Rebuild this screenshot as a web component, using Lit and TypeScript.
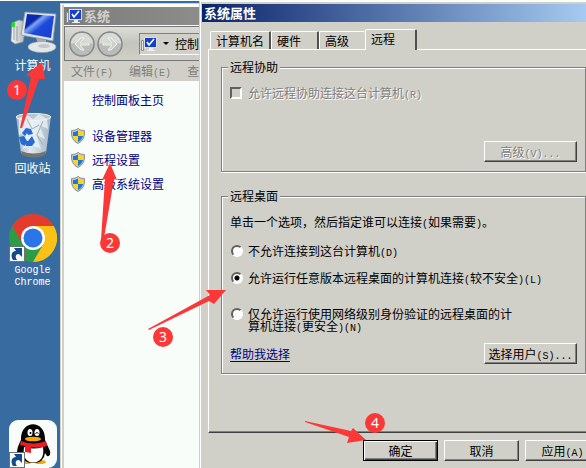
import { LitElement, html, css, svg } from "lit";
import { customElement, state } from "lit/decorators.js";

const key = (k: string) => html`<span class="key">(${k})</span>`;

const pcIcon = (size: number) => html`
  <svg width=${size} height=${size} viewBox="0 0 48 48" aria-hidden="true">
    <defs>
      <linearGradient id="scr" x1="0" y1="0" x2="1" y2="1">
        <stop offset="0" stop-color="#0a2fb4" />
        <stop offset=".3" stop-color="#0a28b0" />
        <stop offset=".38" stop-color="#7fa4f0" />
        <stop offset=".55" stop-color="#1c48dc" />
        <stop offset="1" stop-color="#1a3fd0" />
      </linearGradient>
      <linearGradient id="twr" x1="0" x2="1">
        <stop offset="0" stop-color="#f4f5f4" />
        <stop offset="1" stop-color="#a9aeb0" />
      </linearGradient>
    </defs>
    <path d="M3 15 L10 12 L18 14 L14 34 L6 36 L2 33Z" fill="url(#twr)" stroke="#8d9498" stroke-width=".6" />
    <path d="M5 18v14M8 18v15" stroke="#8b9194" stroke-width=".8" />
    <rect x="3" y="14" width="3" height="5" fill="#36d43a" />
    <path d="M16 4 L47 6 L44 33 L12 27Z" fill="#dfe3e4" stroke="#8f989c" stroke-width=".8" />
    <path d="M18 6 L45 8 L42 30 L15 25Z" fill="url(#scr)" />
    <path d="M27 30 L37 32 L37 38 L30 38Z" fill="#a8afb1" />
    <ellipse cx="33" cy="39" rx="14" ry="5.500" fill="#e4e7e7" stroke="#9aa1a3" stroke-width=".6" />
    <ellipse cx="35" cy="38" rx="6" ry="2" fill="#c3c8ca" />
  </svg>`;

const shortcut = svg`
  <rect x=".5" y="32.500" width="15" height="15" fill="#f8fdfa" stroke="#6c7276" />
  <path d="M4 46 C1 41 3 37 7 37 L5 34 L13 34 L13 43 L10 40 C6 40 6 43 8 46Z" fill="#124a8c" />`;

const binIcon = html`
  <svg width="48" height="48" viewBox="0 0 48 48" aria-hidden="true">
    <defs>
      <linearGradient id="bin" x1="0" x2="1">
        <stop offset="0" stop-color="#9fb6c6" />
        <stop offset=".4" stop-color="#dfe9f0" />
        <stop offset="1" stop-color="#a3b5c3" />
      </linearGradient>
    </defs>
    <path d="M7 5 L42 5 L37 42 Q25 49 12 42Z" fill="url(#bin)" />
    <path d="M12 40 Q25 45 37 40 L36 44 Q25 49 13 44Z" fill="#77736f" />
    <ellipse cx="24.500" cy="6" rx="17.500" ry="3.500" fill="#b9c4cb" stroke="#f0f2f2" />
    <path d="M10 7 L18 4 L24 8 L30 3 L38 8 L39 18 L30 14 L36 28 L27 24 L32 38 L22 34 L14 38 L17 22 L10 24Z" fill="#eef3f6" opacity=".75" />
    <path d="M18 8 L23 18 L30 14 M34 10 L28 24 L34 34" fill="none" stroke="#9aaebc" />
    <path d="M13 22 l4-5 5 1 2 5-5 1-1-2-2 3Z M10 26 l5-1 3 5-2 5-4-2Z M19 30 l4-5 3 6-3 4h-6v-5Z" fill="#2a6bd0" />
  </svg>`;

const chromeIcon = html`
  <svg width="48" height="48" viewBox="0 0 48 48" aria-hidden="true">
    <circle cx="24" cy="24" r="24" fill="#2b9d47" />
    <path d="M24 12 H44.800 A24 24 0 0 1 24 48 L34.400 30Z" fill="#fbc116" />
    <path d="M24 24 L13.600 30 L3.200 12 A24 24 0 0 1 44.800 12 H24Z" fill="#e33b2e" />
    <circle cx="24" cy="24" r="12" fill="#fff" />
    <circle cx="24" cy="24" r="9.500" fill="#2a76e8" />
    ${shortcut}
  </svg>`;

const qqIcon = html`
  <svg width="48" height="48" viewBox="0 0 48 48" aria-hidden="true">
    <rect width="48" height="48" rx="9" fill="#f8fdfa" />
    <ellipse cx="17" cy="42" rx="6" ry="2" fill="#f6a800" />
    <ellipse cx="31" cy="42" rx="6" ry="2" fill="#f6a800" />
    <path d="M12 20 C11 -1 37 -1 36 20 L41 31 Q42 37 38 36 L36 33 Q35 43 24 43 Q14 43 12 34 L8 33 Q8 27 12 20Z" fill="#050505" />
    <path d="M15 27 Q24 30 34 27 Q36 42 24 42.500 Q13 42 15 27Z" fill="#fff" />
    <path d="M12 21 Q24 26 37 21 L38 26 Q30 29 22 27 V33 L16 32 V26 L11 25Z" fill="#ea1c24" />
    <ellipse cx="21" cy="12.500" rx="2.500" ry="3.500" fill="#fff" />
    <ellipse cx="28" cy="12.500" rx="2.500" ry="3.500" fill="#fff" />
    <circle cx="21.500" cy="13" r="1" />
    <path d="M26.500 13.500 q1.500-2 3 0" fill="none" stroke="#000" />
    <ellipse cx="24" cy="19" rx="8" ry="2.300" fill="#f6a800" />
    ${shortcut}
  </svg>`;

const sysIcon = html`
  <svg width="16" height="16" viewBox="0 0 16 16" aria-hidden="true">
    <path d="M.5 4.500h2v10h-2z" fill="#e4e6e4" stroke="#8a9094" />
    <rect x="3.500" y="1.500" width="12" height="10" fill="#1540cc" stroke="#d8dfe6" />
    <path d="M6 6l2 3 5-6" fill="none" stroke="#fff" stroke-width="1.600" />
    <path d="M8 12h4v2h2v1H6v-1h2z" fill="#eceeec" />
  </svg>`;

const shieldIcon = html`
  <svg width="14" height="16" viewBox="0 0 14 16" aria-hidden="true">
    <path d="M7 .5 Q9 2.500 13.500 2.500 Q14.500 12 7 15.500 Q-.5 12 .5 2.500 Q5 2.500 7 .5Z" fill="#c4c8c6" stroke="#8c9294" />
    <path d="M7 2.500V8H2V4Q5 4 7 2.500Z" fill="#1f78d8" />
    <path d="M7 2.500V8h5V4Q9 4 7 2.500Z" fill="#ffd21e" />
    <path d="M2 8h5v6Q3 12 2 8Z" fill="#ffd21e" />
    <path d="M12 8H7v6q4-2 5-6Z" fill="#1f78d8" />
  </svg>`;

const navIcon = (flip: boolean) => html`
  <svg width="26" height="26" viewBox="0 0 26 26" aria-hidden="true">
    <circle cx="13" cy="13" r="12" fill="#b9bcb8" stroke="#85898a" stroke-width="1.500" />
    <path d="M2 13a11 11 0 0 1 22 0q-11-5-22 0Z" fill="#d9dbd7" />
    <path d=${flip ? "M20 13l-6-6h-3l4 5H6v2h9l-4 5h3Z" : "M6 13l6-6h3l-4 5h9v2h-9l4 5h-3Z"} fill="#cfd1cd" stroke="#f0f2ee" />
  </svg>`;

@customElement("app-root")
export class AppRoot extends LitElement {
  @state() private choice = 1;

  static styles = css`
    :host {
      display: block;
      --face: #d1d0c8;
      --paper: #f8fdfa;
      --shade: #808080;
      font: 12px/12px "Noto Sans CJK SC", sans-serif;
      color: #000;
    }
    * { box-sizing: border-box; }
    svg { display: block; flex: none; }
    button, input { font: inherit; color: inherit; margin: 0; }
    .key { font: 10px/0 "Liberation Mono", monospace; }
    .screen {
      position: relative;
      display: grid;
      grid-template-columns: 60px 139px 1fr;
      height: 100vh;
      overflow: hidden;
      background: #386ca0;
      border-top: 1px solid var(--paper);
    }
    .desktop {
      display: grid;
      grid-auto-rows: 103px;
      padding: 7px 0 0 5px;
      align-content: start;
    }
    .shortcut {
      display: flex;
      flex-direction: column;
      align-items: center;
      gap: 3px;
      color: #fff;
      text-align: center;
      text-decoration: none;
    }
    .shortcut:last-child { grid-row: 5; }
    .mono { font: 10px/12px "Liberation Mono", monospace; }

    .system {
      margin-top: 2px;
      min-width: 0;
      overflow: hidden;
      display: flex;
      flex-direction: column;
      background: var(--paper);
      border: 1px solid var(--face);
      border-width: 1px 0 0 1px;
      box-shadow: inset 1px 1px 0 #fff, inset 3px 0 0 var(--face);
      padding: 3px 0 0 3px;
      white-space: nowrap;
    }
    .system-title {
      display: flex;
      align-items: center;
      gap: 2px;
      height: 18px;
      padding-left: 2px;
      margin: 0;
      background: linear-gradient(90deg, #7d7d7d, #8c8c8a);
      color: var(--face);
      font-size: 13px;
      font-weight: 700;
    }
    .toolbar {
      display: flex;
      align-items: center;
      height: 35px;
      padding-left: 4px;
      gap: 2px;
      background: linear-gradient(#dddcd6, #c4c4be 50%, #d1d0c8);
      border: 1px solid #77777a;
      border-right: 0;
      margin-top: 1px;
    }
    .nav { padding: 0; border: 0; background: none; }
    .address {
      display: flex;
      align-items: center;
      flex: none;
      gap: 6px;
      height: 22px;
      margin-left: 14px;
      padding: 0 1px;
      border: 1px solid var(--shade);
      border-right-color: #fff;
      border-bottom-color: #fff;
      background: var(--face);
    }
    .menu {
      display: flex;
      gap: 16px;
      height: 20px;
      align-items: center;
      padding-left: 7px;
      background: var(--face);
    }
    .menu-item { padding: 0; border: 0; background: none; color: var(--shade); flex: none; }
    .links {
      display: flex;
      flex-direction: column;
      gap: 8px;
      padding: 11px 0 0 7px;
    }
    .link {
      display: flex;
      align-items: center;
      gap: 7px;
      height: 16px;
      color: #000080;
      text-decoration: none;
    }
    .home { padding-left: 21px; margin-bottom: 12px; }

    .dialog {
      min-width: 0;
      display: flex;
      flex-direction: column;
      background: var(--face);
      border-left: 1px solid var(--face);
      box-shadow: inset 1px 1px 0 #fff;
      padding: 3px 0 0 2px;
    }
    .title {
      display: flex;
      align-items: center;
      height: 18px;
      margin: 0;
      padding-left: 2px;
      background: linear-gradient(90deg, #0a246a, #a6caf0);
      color: #fff;
      font-size: 13px;
      font-weight: 700;
    }
    .tabs {
      display: flex;
      align-items: flex-end;
      padding: 7px 0 0 8px;
    }
    .tab {
      height: 18px;
      padding: 0 2px 0 5px;
      border: 1px solid #fff;
      border-right: 2px solid #505050;
      border-bottom: 0;
      border-radius: 2px 2px 0 0;
      background: var(--face);
      text-align: left;
    }
    .tab-wide { width: 61px; }
    .tab-short { width: 48px; }
    .tab-last { border-right: 0; width: 46px; }
    .tab-active {
      height: 21px;
      width: 52px;
      margin-bottom: -1px;
      padding-bottom: 2px;
      z-index: 1;
    }
    .panel {
      margin-left: 6px;
      padding: 10px 0 58px 12px;
      border-left: 1px solid #fff;
      border-top: 1px solid #fff;
      border-bottom: 1px solid #404040;
      box-shadow: inset 0 -1px 0 var(--shade);
    }
    .group {
      min-width: 0;
      margin: 0;
      padding: 13px 8px 9px 8px;
      border: 1px solid var(--shade);
      box-shadow: inset 1px 1px 0 #fff, 0 1px 0 #fff;
      display: flex;
      flex-direction: column;
    }
    .group + .group { margin-top: 17px; }
    .legend {
      line-height: 14px;
      padding: 0 2px;
      margin-left: -2px;
      background: var(--face);
    }
    .option {
      display: flex;
      align-items: flex-start;
      gap: 6px;
    }
    .disabled { color: var(--shade); text-shadow: 1px 1px 0 #fff; }
    .check, .radio { appearance: none; flex: none; width: 12px; height: 12px; }
    .check {
      border: 2px solid;
      border-color: #606060 #fff #fff #606060;
      background: var(--face);
    }
    .radio {
      border: 2px solid;
      border-color: #606060 #fff #fff #606060;
      border-radius: 50%;
      background: var(--paper);
      margin-left: 1px;
    }
    .radio:checked { background: radial-gradient(circle, #000 2px, var(--paper) 3px); }
    .option-radio { gap: 5px; }
    .hint { margin: 0 0 17px; }
    .second { margin: 15px 0 24px; }
    .row { display: flex; align-items: center; justify-content: space-between; margin-top: 11px; }
    .row-end { justify-content: flex-end; margin-top: 42px; }
    .help { color: #000080; text-decoration: underline; text-underline-offset: 2px; }
    .btn {
      flex: none;
      height: 21px;
      width: 75px;
      padding: 0;
      border: 1px solid;
      border-color: #fff #404040 #404040 #fff;
      box-shadow: inset -1px -1px 0 var(--shade);
      background: var(--face);
      white-space: nowrap;
    }
    .btn-wide { width: 93px; }
    .btn-default { border-color: #000; box-shadow: inset 1px 1px 0 #fff, inset -1px -1px 0 #404040, inset -2px -2px 0 var(--shade); }
    .footer {
      display: flex;
      justify-content: flex-end;
      gap: 6px;
      margin-right: -14px;
      padding-top: 7px;
    }
    .marks {
      position: absolute;
      inset: -1px 0 0 0;
      width: 100%;
      height: 100%;
      z-index: 2;
      pointer-events: none;
      fill: #fb3838;
    }
    .num { fill: #fff; font: 14px "Noto Sans", sans-serif; text-anchor: middle; }
  `;

  private radio(i: number, body: unknown, cls = "") {
    return html`<label class="option option-radio ${cls}">
      <input class="radio" type="radio" name="remote" .checked=${this.choice === i} @change=${() => (this.choice = i)} />
      <span>${body}</span>
    </label>`;
  }

  render() {
    const marks: [string, number, number][] = [
      ["42,62 26,75 31,77 20,128 22,128 39,79 45,79", 17, 90],
      ["110,163 102,180 105,179 101,240 104,238 114,179 117,180", 110, 243],
      ["226,290 206,290 210,295 148,329 149,330 209,301 214,304", 163, 337],
      ["366,440 353,428 351,431 305,421 305,422 349,437 347,443", 375, 423],
    ];
    return html`
      <main class="screen">
        <nav class="desktop">
          <a class="shortcut" href="#pc">${pcIcon(48)}<span>计算机</span></a>
          <a class="shortcut" href="#bin">${binIcon}<span>回收站</span></a>
          <a class="shortcut" href="#chrome">${chromeIcon}<span class="mono">Google<br />Chrome</span></a>
          <a class="shortcut" href="#qq" aria-label="QQ">${qqIcon}</a>
        </nav>

        <section class="system">
          <h2 class="system-title">${sysIcon}系统</h2>
          <div class="toolbar">
            <button class="nav" aria-label="后退">${navIcon(false)}</button>
            <button class="nav" aria-label="前进">${navIcon(true)}</button>
            <div class="address">
              ${sysIcon}
              <svg width="6" height="4" viewBox="0 0 6 4" aria-hidden="true"><path d="M0 0h6L3 3Z" /></svg>
              <span>控制面板</span>
            </div>
          </div>
          <div class="menu">
            <button class="menu-item">文件${key("F")}</button>
            <button class="menu-item">编辑${key("E")}</button>
            <button class="menu-item">查看${key("V")}</button>
          </div>
          <nav class="links">
            <a class="link home" href="#home">控制面板主页</a>
            <a class="link" href="#devices">${shieldIcon}设备管理器</a>
            <a class="link" href="#remote">${shieldIcon}远程设置</a>
            <a class="link" href="#advanced">${shieldIcon}高级系统设置</a>
          </nav>
        </section>

        <section class="dialog" role="dialog" aria-labelledby="title">
          <h1 class="title" id="title">系统属性</h1>
          <div class="tabs" role="tablist">
            <button class="tab tab-wide" role="tab">计算机名</button>
            <button class="tab tab-short" role="tab">硬件</button>
            <button class="tab tab-last" role="tab">高级</button>
            <button class="tab tab-active" role="tab" aria-selected="true">远程</button>
          </div>
          <div class="panel" role="tabpanel">
            <fieldset class="group">
              <legend class="legend">远程协助</legend>
              <label class="option disabled">
                <input class="check" type="checkbox" disabled />
                <span>允许远程协助连接这台计算机${key("R")}</span>
              </label>
              <div class="row row-end">
                <button class="btn btn-wide disabled" disabled>高级<span class="key">(V)...</span></button>
              </div>
            </fieldset>
            <fieldset class="group">
              <legend class="legend">远程桌面</legend>
              <p class="hint">单击一个选项，然后指定谁可以连接<span class="key">(</span>如果需要<span class="key">)</span>。</p>
              ${this.radio(0, html`不允许连接到这台计算机${key("D")}`)}
              ${this.radio(1, html`允许运行任意版本远程桌面的计算机连接<span class="key">(</span>较不安全<span class="key">)(L)</span>`, "second")}
              ${this.radio(2, html`仅允许运行使用网络级别身份验证的远程桌面的计<br />算机连接<span class="key">(</span>更安全<span class="key">)(N)</span>`)}
              <div class="row">
                <a class="help" href="#help">帮助我选择</a>
                <button class="btn btn-wide">选择用户<span class="key">(S)...</span></button>
              </div>
            </fieldset>
          </div>
          <div class="footer">
            <button class="btn btn-default">确定</button>
            <button class="btn">取消</button>
            <button class="btn">应用${key("A")}</button>
          </div>
        </section>

        <svg class="marks">
          ${marks.map(
            ([points, x, y], i) => svg`
              <polygon points=${points} />
              <circle cx=${x} cy=${y} r="10" />
              <text class="num" x=${x} y=${y + 5}>${i + 1}</text>`
          )}
        </svg>
      </main>
    `;
  }
}
